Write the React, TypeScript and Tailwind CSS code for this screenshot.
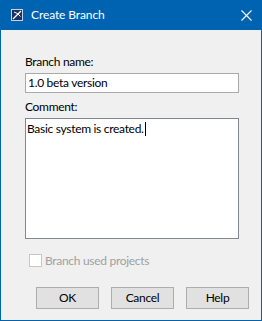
import React from "react";

const font = { fontFamily: "Lato, 'Liberation Sans', sans-serif" };

function AppIcon() {
  return (
    <svg width="12" height="12" viewBox="0 0 12 12" className="shrink-0">
      <rect x="0.5" y="0.5" width="11" height="11" fill="#1d2f63" stroke="#c9d3e6" />
      <path d="M2 10 L10 2" stroke="#ffffff" strokeWidth="1.2" />
      <path d="M3 3 Q7 4 9.5 7.5" stroke="#ffffff" strokeWidth="1" fill="none" />
    </svg>
  );
}

export default function App() {
  return (
    <div
      className="w-[262px] h-[321px] flex flex-col bg-[#f0f0f0] border-x border-b border-[#0063b1] text-[12px] text-black tracking-[-0.3px]"
      style={font}
    >
      <div className="h-[30px] shrink-0 bg-[#0063b1] flex items-center pl-[10px] pr-[9px] text-white">
        <AppIcon />
        <span className="ml-[8px] text-[12px] leading-none tracking-[-0.1px]">Create Branch</span>
        <div className="flex-1" />
        <svg width="11" height="11" viewBox="0 0 11 11">
          <path d="M0.5 0.5 L10.5 10.5 M10.5 0.5 L0.5 10.5" stroke="#ffffff" strokeWidth="1.1" />
        </svg>
      </div>
      <div className="flex-1 flex flex-col pt-[24px] pl-[24px]">
        <div className="leading-[16px] h-[16px]">Branch name:</div>
        <div className="mt-[3px] w-[214px] h-[20px] bg-white border border-[#a9a9a9] flex items-center pl-[2px] leading-[16px]">
          1.0 beta version
        </div>
        <div className="mt-[6px] leading-[16px] h-[16px]">Comment:</div>
        <div className="mt-[3px] w-[214px] h-[121px] bg-white border border-[#828790] pl-[1px] pt-[2px] leading-[16px]">
          <span>Basic system is created.</span>
          <span className="inline-block w-[1px] h-[14px] bg-black align-[-3px] ml-[1px]" />
        </div>
        <div className="mt-[15px] flex items-center ml-[4px] h-[13px]">
          <div className="w-[13px] h-[13px] bg-white border border-[#c6c6c6] shrink-0" />
          <span className="ml-[3px] text-[#a0a0a0] leading-[16px]">Branch used projects</span>
        </div>
        <div className="mt-[20px] ml-[11px] flex gap-[12px]">
          <div className="w-[63px] h-[22px] bg-[#e1e1e1] border border-[#adadad] flex items-center justify-center">OK</div>
          <div className="w-[63px] h-[22px] bg-[#e1e1e1] border border-[#adadad] flex items-center justify-center">Cancel</div>
          <div className="w-[63px] h-[22px] bg-[#e1e1e1] border border-[#adadad] flex items-center justify-center">Help</div>
        </div>
      </div>
    </div>
  );
}
